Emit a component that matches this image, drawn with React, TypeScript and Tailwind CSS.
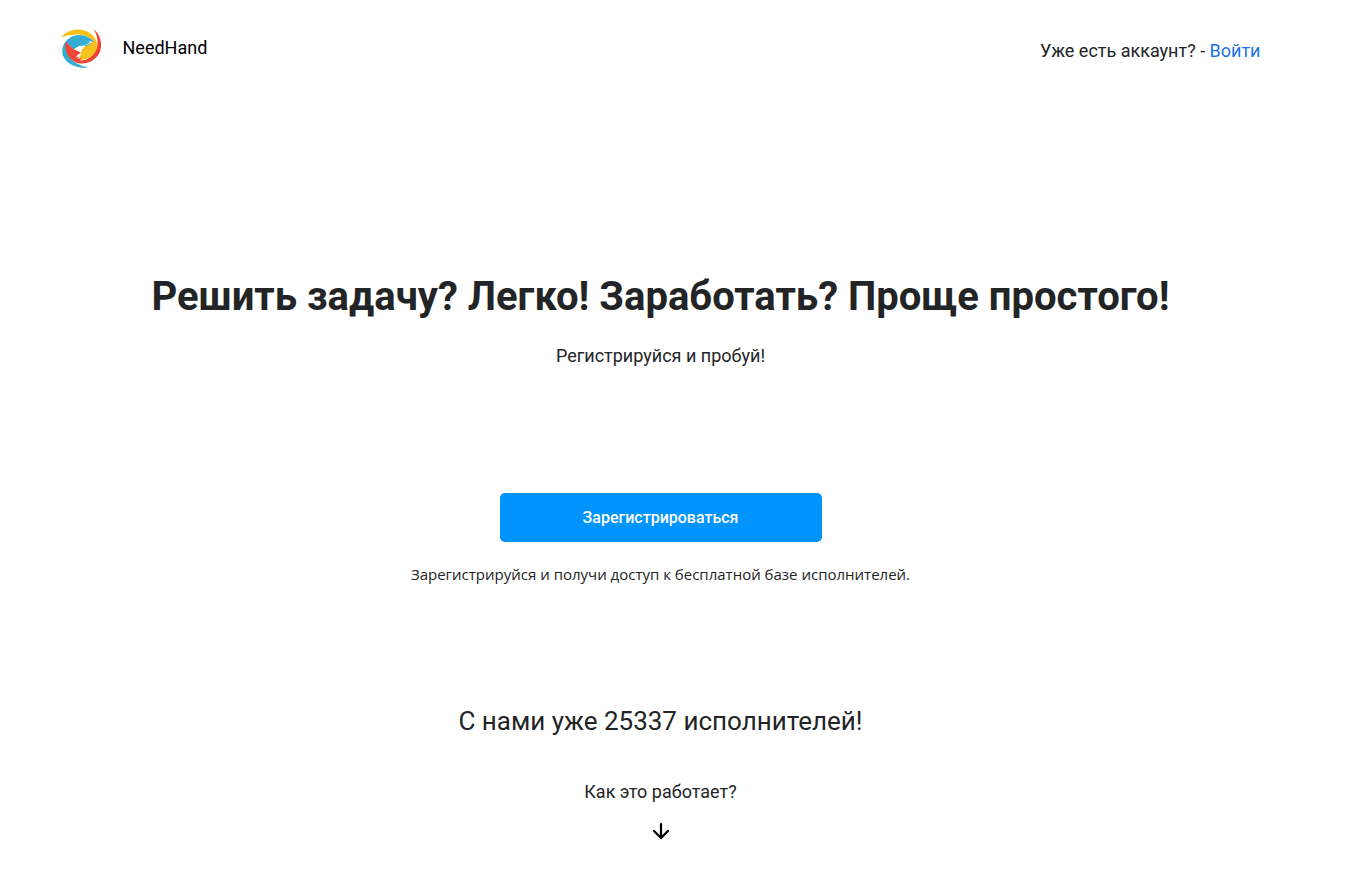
import React from "react";
import { ArrowDown } from "lucide-react";

const performersCount = 25337;

const App: React.FC = () => {
  return (
    <div className="min-h-screen bg-white pr-6 font-['Roboto',sans-serif] text-lg text-[#222426]">
      <header className="max-w-[1200px] mx-auto pt-7 flex items-start justify-between">
        <a href="#" className="flex items-center gap-[22px] text-black">
          <Logo />
          <span>NeedHand</span>
        </a>
        <p className="pt-[9px]">
          Уже есть аккаунт? -{" "}
          <a href="#login" className="text-[#1a73e8] hover:underline">
            Войти
          </a>
        </p>
      </header>

      <main className="pt-[201px] pb-6 px-4 flex flex-col items-center text-center">
        <h1 className="text-[40px] leading-14 font-bold">
          Решить задачу? Легко! Заработать? Проще простого!
        </h1>
        <p className="mt-[17px]">Регистрируйся и пробуй!</p>

        <button
          type="button"
          className="mt-[123px] w-full max-w-[322px] h-[49px] rounded-[5px] bg-[#0094ff] hover:bg-[#0084e6] text-white text-base font-medium transition-colors"
        >
          Зарегистрироваться
        </button>
        <p className="mt-5 font-['Open_Sans',sans-serif] text-[15px] leading-6">
          Зарегистрируйся и получи доступ к бесплатной базе исполнителей.
        </p>

        <p className="mt-[115px] text-[26px] leading-10">
          С нами уже {performersCount} исполнителей!
        </p>

        <a href="#how" className="mt-[37px] flex flex-col items-center gap-[13px]">
          Как это работает?
          <ArrowDown className="w-6 h-6 text-black" strokeWidth={2.25} />
        </a>
      </main>
    </div>
  );
};

function Logo() {
  return (
    <svg viewBox="28 24 120 120" className="w-10 h-10" aria-hidden="true">
      {/* three hands, each with its swoosh */}
      <path
        d="M29 52C46 30 76 24 102 32C126 42 138 62 138 84C136 106 112 116 84 122L90 84L126 64C112 49 90 41 68 44C50 45 38 48 29 52Z"
        fill="#f8c018"
      />
      <path
        d="M128 66C114 50 90 41 68 47C44 55 30 74 32 98C35 126 70 148 112 142C86 138 60 126 50 104C44 92 42 80 46 70L66 88L82 79L98 77L108 79L101 71L116 77L106 67L122 74L110 64Z"
        fill="#32acd2"
      />
      <path
        d="M126 28C150 46 155 82 139 106C122 130 92 136 70 126C48 114 36 90 43 64C49 75 60 81 66 88L76 92L88 98L78 104L73 113L84 109L77 118L90 112L84 121C108 123 130 106 136 84C140 66 138 46 126 28Z"
        fill="#f04434"
      />
      {/* dove */}
      <path
        d="M69 87L82 79L101 76L97 83L91 88L88 97L83 89L76 91Z"
        fill="#fff"
      />
      {/* gaps between fingers */}
      <path
        d="M92 58L114 68M80 62L102 72M106 88L94 106M116 89L100 112M126 89L108 114M52 88L70 108M60 88L72 104"
        stroke="#fff"
        strokeWidth="1"
        opacity="0.3"
      />
    </svg>
  );
}

export default App;
